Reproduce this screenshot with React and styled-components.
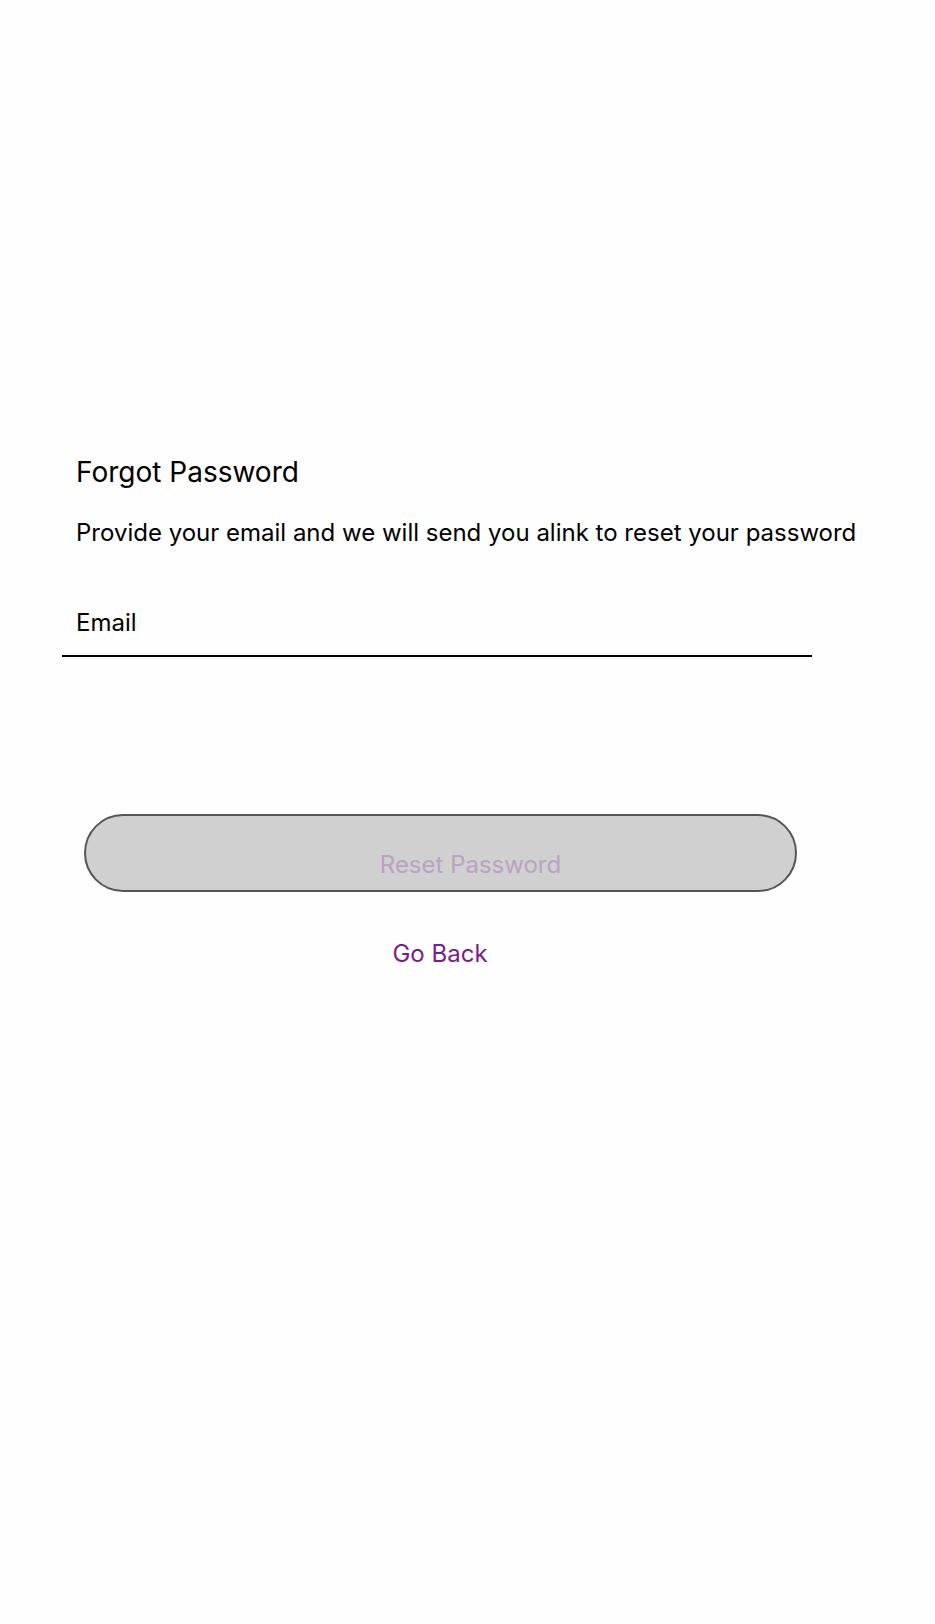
import React from "react";
import styled, { createGlobalStyle } from "styled-components";

const GlobalStyle = createGlobalStyle`
    html, body {
        margin: 0;
        padding: 0;
        background: #fefefe;
    }
    body {
        font-family: Inter, "Noto Sans", sans-serif;
        color: #000;
    }
`;

const Page = styled.div`
    min-height: 1624px;
    padding-top: 455px;
    box-sizing: border-box;
`;

const Form = styled.form`
    display: flex;
    flex-direction: column;
    width: 750px;
    margin-left: 62px;
`;

const Title = styled.h1`
    margin: 0 0 0 14px;
    font-size: 28px;
    line-height: 34px;
    font-weight: 400;
`;

const Subtitle = styled.p`
    margin: 29px 0 0 14px;
    font-size: 24px;
    line-height: 29px;
    white-space: nowrap;
`;

const Field = styled.input`
    margin-top: 61px;
    padding: 0 0 18px 14px;
    border: 0;
    border-bottom: 2px solid #000;
    background: transparent;
    font-family: inherit;
    font-size: 24px;
    line-height: 29px;
    outline: none;
    &::placeholder {
        color: #000;
    }
`;

const ResetButton = styled.button`
    align-self: flex-start;
    margin: 157px 0 0 22px;
    width: 713px;
    height: 78px;
    padding: 23px 0 0 60px;
    border: 2px solid #555;
    border-radius: 39px;
    background: #d0d0d0;
    color: #b9a2c3;
    font-family: inherit;
    font-size: 24px;
`;

const BackLink = styled.a`
    align-self: center;
    margin: 47px 0 0 6px;
    color: #7a1d8c;
    font-size: 24px;
    line-height: 29px;
    text-decoration: none;
    cursor: pointer;
`;

export default function App() {
    return (
        <Page>
            <GlobalStyle />
            <Form onSubmit={ (e) => e.preventDefault() }>
                <Title>Forgot Password</Title>
                <Subtitle>Provide your email and we will send you alink to reset your password</Subtitle>
                <Field type="email" placeholder="Email" />
                <ResetButton type="submit" disabled>Reset Password</ResetButton>
                <BackLink>Go Back</BackLink>
            </Form>
        </Page>
    );
}
